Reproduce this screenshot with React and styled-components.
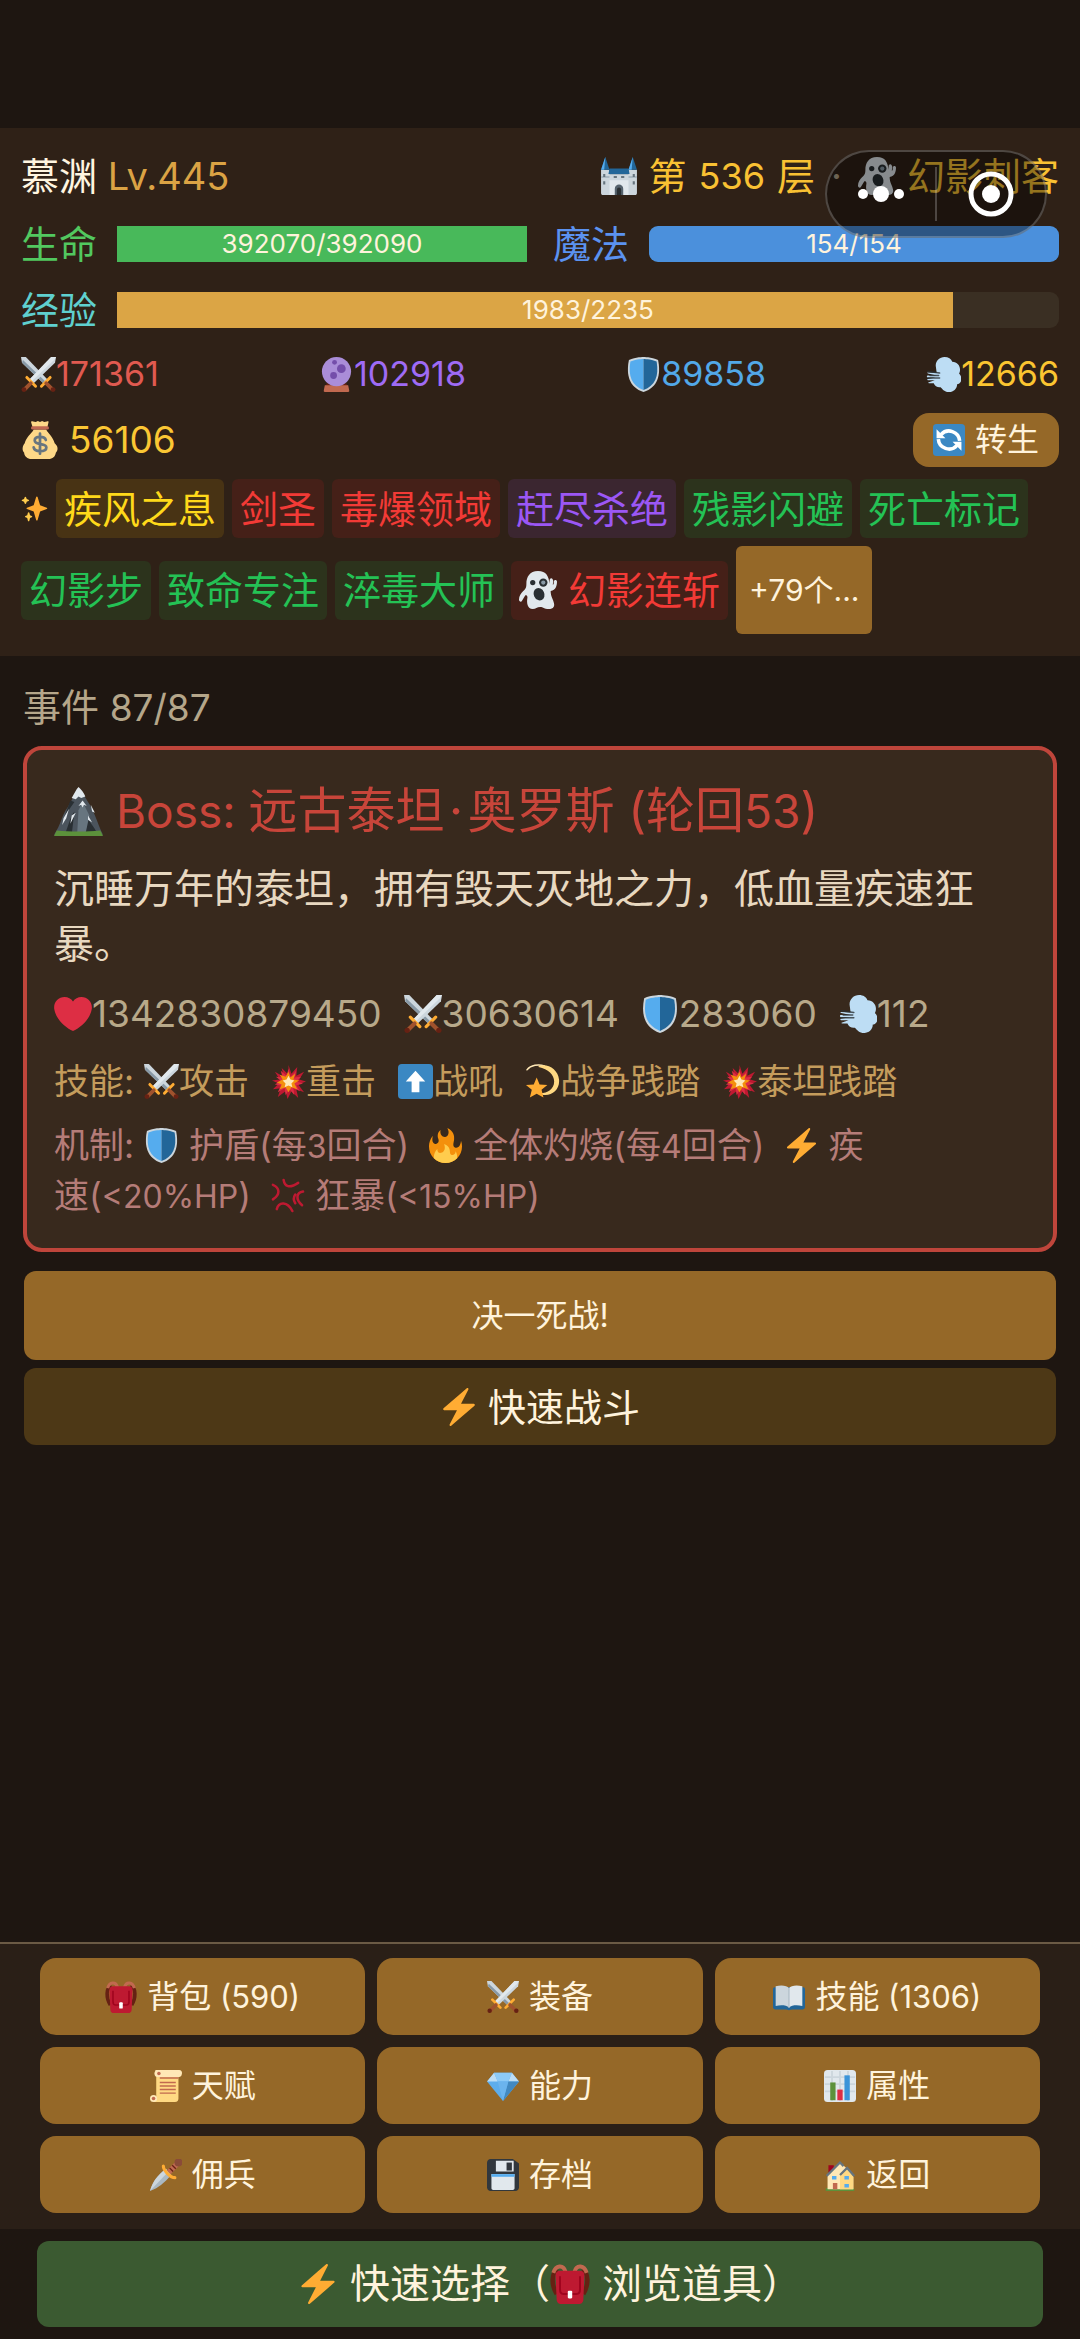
import { styled, createGlobalStyle } from "styled-components";

const GlobalStyle = createGlobalStyle`
    * {
        box-sizing: border-box;
    }
    body {
        margin: 0;
        background: #1e1611;
        color: #fff3dc;
        font-family: "Inter", "Noto Sans CJK SC", sans-serif;
    }
    button {
        font-family: inherit;
        color: inherit;
        line-height: 44px;
        border: none;
        margin: 0;
        cursor: pointer;
    }
`;

// emoji artwork, every drawing on a 36 x 36 grid
const art = {
    castle: (
        <>
            <path fill="#CCD6DD" d="M1 12h8v3h18v-3h8v22c0 1-.5 2-2 2H3c-1.500 0-2-1-2-2z" />
            <path fill="#AAB8C2" d="M1 18h8v2H1zM27 18h8v2h-8zM9 15h18v2H9z" />
            <path fill="#E1E8ED" d="M9 22h18v14H9z" />
            <path fill="#226699" d="M5 0 1 12h8zM31 0l-4 12h8zM9 11h18l1 5H8z" />
            <path fill="#55ACEE" d="M5 0 1 12h3zM31 0l-4 12h3z" />
            <path fill="#66757F" d="M3 16h2v3H3zM31 16h2v3h-2zM3 23h2v3H3zM31 23h2v3h-2zM13 18h3v2h-3zM20 18h3v2h-3z" />
            <path fill="#55626D" d="M14 36v-6a4 4 0 0 1 8 0v6z" />
            <path fill="#292F33" d="M16 36v-5a2 2 0 0 1 4 0v5z" />
        </>
    ),
    ghost: (
        <>
            <path fill="#E1E8ED" d="M18 0C10 0 7 6 7 12c0 4-1 5-3 7-2 2-4 5-4 8 0 2 2 3 3 1l3-5c1 0 2 0 2 2-1 5 0 11 5 11 3 0 4-2 7-2 3 0 4 2 8 2 5 0 6-3 5-6-1-4-3-6-3-11 5-1 6-5 6-9 0-2-3-2-3 0 0 2 0 3-1 3 0-1 1-4 0-5-1-2-3-1-3 1v3c-1-7-3-12-11-12z" />
            <circle cx="13" cy="11" r="2.500" fill="#292F33" />
            <circle cx="23" cy="11" r="4" fill="#292F33" />
            <circle cx="23" cy="11" r="2" fill="#8899A6" />
            <ellipse cx="19" cy="22" rx="5" ry="6" fill="#292F33" transform="rotate(-25 19 22)" />
        </>
    ),
    swords: (
        <>
            <path fill="#CCD6DD" d="M0 0h5l23 24-4 4L1 6z" />
            <path fill="#8899A6" d="m2 3 24 23-2 2L1 6z" />
            <path fill="#CCD6DD" d="M36 0h-5L8 24l4 4L35 6z" />
            <path fill="#E1E8ED" d="M36 0h-5L8 24l2 2L34 3z" />
            <path stroke="#FFAC33" strokeWidth="3" strokeLinecap="round" d="m6 21 9 9M30 21l-9 9" />
            <path stroke="#A0522D" strokeWidth="4" strokeLinecap="round" d="m10 27-6 6M26 27l6 6" />
            <circle cx="3" cy="33.500" r="2.500" fill="#662113" />
            <circle cx="33" cy="33.500" r="2.500" fill="#662113" />
        </>
    ),
    orb: (
        <>
            <path fill="#662113" d="M8 27h20l2 4H6z" />
            <path fill="#C1694F" d="M6 29h24l1 5c.300 1.500 0 2-1 2H6c-1 0-1.300-.500-1-2z" />
            <circle cx="18" cy="15" r="15" fill="#AA8DD8" />
            <circle cx="23" cy="12" r="4.500" fill="#744EAA" />
            <circle cx="15" cy="19" r="3.500" fill="#744EAA" />
            <circle cx="16" cy="5.500" r="2.500" fill="#744EAA" />
        </>
    ),
    shield: (
        <>
            <path fill="#CCD6DD" d="M33 3c-7-3-15-3-15-3S10 0 3 3C0 18 3 31 18 36 33 31 36 18 33 3z" />
            <path fill="#55ACEE" d="M18 34C6 29 2 20 4.500 4.500 11 2 18 2 18 2z" />
            <path fill="#226699" d="M18 34c12-5 16-14 13.500-29.500C25 2 18 2 18 2z" />
        </>
    ),
    wind: (
        <>
            <path fill="#BDDDF4" d="M10 9c0-5 4-9 9-9 4 0 7 2 8 5 5 0 8 4 8 8 0 2-.500 3-1 4 2 2 2.500 4 2.500 5.500C36.500 26 34 28 32 28c0 5-4 8-8 8-5 0-7-3-9-5-3 .500-6-1-7-4H3c-1 0-1-1 0-1l6-2H2c-1 0-1-1.500 0-1.500L10 21H2c-1.500 0-1.500-2 0-2h9l-9-2c-1-.500-1-1 0-1l9 .500z" />
            <path stroke="#292F33" strokeWidth="1.500" strokeLinecap="round" d="M2 15l12 1.500M2 21.500h12M4 19h9" opacity=".8" />
        </>
    ),
    money: (
        <>
            <path fill="#FDD888" d="M31.900 21c-1.500-6-6.500-9.500-8-13H12c-1.500 3.500-7 7-8.500 13C1 24 1 28 3 30c0 3 3 6 7 6h16c4 0 6.500-2.500 7-6 3-3 1.500-7-1.100-9z" />
            <path fill="#FDD888" d="M11 6 9.500 1c0-1 1-1 2-.500L14 1l2-1 2 1 2-1 2 1 2.500-.500c1-.500 2 0 1.500 1L25 6z" />
            <path fill="#BF6952" d="M10.500 5h15c1 0 1.500 3 0 3h-15c-1.500 0-1-3 0-3z" />
            <path fill="none" stroke="#67757F" strokeWidth="2.600" strokeLinecap="round" d="M18 12v19M23.500 18c-.500-2-2.500-3-5.500-3s-5 1.300-5 3.500c0 5 11 2 11 6.500 0 2.200-2.500 3.500-6 3.500-3.300 0-5.500-1-6-3.500" />
        </>
    ),
    refresh: (
        <>
            <rect width="36" height="36" rx="4" fill="#3B88C3" />
            <path fill="none" stroke="#fff" strokeWidth="4" d="M9 12a12 12 0 0 1 21 7M27 24A12 12 0 0 1 6 17" />
            <path fill="#fff" d="M4 6v10h10zM32 30V20H22z" />
        </>
    ),
    sparkles: (
        <>
            <path fill="#FFAC33" d="M34.347 16.893l-8.899-3.294-3.323-10.891c-.128-.42-.517-.708-.956-.708-.439 0-.828.288-.956.708l-3.322 10.891-8.9 3.294c-.393.146-.653.519-.653.938 0 .418.26.793.653.938l8.895 3.293 3.324 11.223c.126.424.516.715.959.715.442 0 .833-.291.959-.716l3.324-11.223 8.896-3.293c.391-.144.652-.518.652-.937 0-.418-.261-.792-.653-.938z" />
            <path fill="#FFCC4D" d="M14.347 27.894l-2.314-.856-.9-3.3c-.118-.436-.513-.738-.964-.738-.451 0-.846.302-.965.737l-.9 3.3-2.313.856c-.393.146-.653.52-.653.938 0 .418.26.792.653.938l2.301.853.907 3.622c.112.444.511.756.97.756.459 0 .858-.312.97-.757l.907-3.622 2.301-.853c.393-.144.653-.519.653-.937 0-.418-.26-.793-.653-.937zM10.009 6.231l-2.364-.875-.876-2.365c-.145-.393-.519-.653-.938-.653-.418 0-.792.26-.938.653l-.875 2.365-2.365.875c-.393.146-.653.52-.653.938 0 .418.26.793.653.938l2.365.875.875 2.365c.146.393.52.653.938.653.418 0 .792-.26.938-.653l.875-2.365 2.365-.875c.393-.146.653-.52.653-.938 0-.418-.26-.792-.653-.938z" />
        </>
    ),
    mountain: (
        <>
            <path fill="#4B545D" d="M0 35C5 28 6 20 10 15c3-5 6-11 8-14 3 3 5 7 7 10 4 5 7 16 11 24z" />
            <path fill="#292F33" d="M8 35c3-8 4-13 7-17l-2 17zM20 35c0-6 2-10 3-15 2 5 7 9 9 15zM12 10l3 1-7 10z" />
            <path fill="#67757F" d="m18 17 3-6 5 10-3 14h-6z" />
            <path fill="#E1E8ED" d="M18 0c2 2 4 4 5 7l-3 1-2-1-2 2-3-1c2-3 3-6 5-8zM21 10l3 4-2-1-1 2-1-2-2 1zM7 23l4-7-2 7-3 5zM27 13l3 6-2-1zM16 19l-4 8 1-6zM25 21l3 5-3-2z" />
            <path fill="#5C913B" d="M0 36l2-4c10 1 22 1 32 0l2 4z" />
        </>
    ),
    heart: (
        <path fill="#DD2E44" d="M35.885 11.833c0-5.45-4.418-9.868-9.867-9.868-3.308 0-6.227 1.633-8.018 4.129-1.791-2.496-4.71-4.129-8.017-4.129-5.45 0-9.868 4.417-9.868 9.868 0 .772.098 1.52.266 2.241C1.751 22.587 11.216 31.568 18 34.034c6.783-2.466 16.249-11.447 17.617-19.959.17-.721.268-1.469.268-2.242z" />
    ),
    boom: (
        <>
            <path fill="#BE1931" d="m18 1 3 9 6-7-1 9 8-4-5 8 7 2-8 3 6 8-8-3 2 9-7-7-4 8-2-8-8 6 3-9-8 1 6-6-7-3 8-1-5-8 9 5-2-9 7 7z" />
            <path fill="#DD2E44" d="m18 5 2 8 6-6-2 7 7-1-5 5 7 2-7 2 4 6-7-3 1 7-5-6-4 6-1-7-7 4 3-7-6-1 6-4-5-4 7 1-2-7 6 5z" />
            <path fill="#F4900C" d="m18 8 2 6 5-4-2 6 6 1-5 3 3 6-6-2-3 5-3-5-6 2 2-5-5-2 6-3-3-5 6 2z" />
            <path fill="#FFE8B6" d="m18 12 2 4 4 1-3 3 1 4-4-2-4 2 1-4-3-3 4-1z" />
        </>
    ),
    up: (
        <>
            <rect width="36" height="36" rx="4" fill="#3B88C3" />
            <path fill="#fff" d="m18 7 10 11h-6v11h-8V18H8z" />
        </>
    ),
    dizzy: (
        <>
            <path fill="none" stroke="#FFE8B6" strokeWidth="1.500" strokeLinecap="round" d="M2 6C6 1 14 0 20 2" />
            <path fill="#FFD983" d="M14 2c10-3 20 4 21 14 1 9-6 16-14 16-3 0-5-1-5-2 7 0 14-4 14-12C30 11 24 5 14 3z" />
            <path fill="#FFAC33" d="m12 14 3 7 8 .500-6 5 2 8-7-4-7 4 2-8-6-5 8-.500z" />
        </>
    ),
    fire: (
        <>
            <path fill="#F4900C" d="M35 19c0-2.062-.367-4.039-1.04-5.868-.46 5.389-3.333 8.157-6.335 6.868-2.812-1.208-.917-5.917-.777-8.164.236-3.809-.012-8.169-6.931-11.794 2.875 5.5.333 8.917-2.333 9.125-2.958.231-5.667-2.542-4.667-7.042-3.238 2.386-3.332 6.402-2.333 9 1.042 2.708-.042 4.958-2.583 5.208-2.84.28-4.418-3.041-2.963-8.333C2.52 10.965 1 14.805 1 19c0 9.389 7.611 17 17 17s17-7.611 17-17z" />
            <path fill="#FFCC4D" d="M28.394 23.999c.148 3.084-2.561 4.293-4.019 3.709-2.106-.843-1.541-2.291-2.083-5.291s-2.625-5.083-5.708-6c2.25 6.333-1.247 8.667-3.08 9.084-1.872.426-3.753-.001-3.968-4.007C7.352 23.668 6 26.676 6 30c0 .368.023.73.055 1.09C9.125 34.124 13.342 36 18 36s8.875-1.876 11.945-4.91c.032-.36.055-.722.055-1.09 0-2.187-.584-4.236-1.606-6.001z" />
        </>
    ),
    bolt: (
        <path fill="#FFAC33" d="M32.938 15.651C32.792 15.26 32.418 15 32 15H19.925L26.89 1.458c.219-.426.106-.947-.271-1.243C26.437.071 26.218 0 26 0c-.233 0-.466.082-.653.243L18 6.588 3.347 19.243c-.316.273-.43.714-.284 1.105S3.582 21 4 21h12.075L9.11 34.542c-.219.426-.106.947.271 1.243.182.144.401.215.619.215.233 0 .466-.082.653-.243L18 29.412l14.653-12.655c.317-.273.43-.714.285-1.106z" />
    ),
    anger: (
        <path fill="none" stroke="#BE1931" strokeWidth="2.600" strokeLinecap="round" d="M14 2c1 7 6 9 15 3M34 14c-7 1-8 8-1 14M3 7c7 3 8 10 0 15M7 32c2-8 11-8 16 2M26 17c-2 3-2 6 0 9" />
    ),
    backpack: (
        <>
            <path fill="none" stroke="#662113" strokeWidth="4" d="M7 5C1 8 1 19 6 27M29 5c6 3 6 14 1 22" />
            <path fill="none" stroke="#C1694F" strokeWidth="3.500" d="M3 8c2-7 9-8 11-1M33 8c-2-7-9-8-11-1" />
            <path fill="#BE1931" d="M9 6h18c3 0 4 2 4 5l-1 21c0 3-2 4-4 4H10c-2 0-4-1-4-4L5 11c0-3 1-5 4-5z" />
            <path fill="none" stroke="#A0041E" strokeWidth="1.800" d="M9 11v12c0 3 1 4 3 4h12c2 0 3-1 3-4V11" />
            <rect x="16" y="24" width="4" height="7" rx="1" fill="#fff" />
        </>
    ),
    scroll: (
        <>
            <path fill="#FFD983" d="M7 4h25v28c0 2-1 4-4 4H4V31h3z" />
            <path fill="#FFE8B6" d="M6 0h27c2 0 3 1.500 3 3.500S35 8 33 8H8z" />
            <circle cx="9" cy="4" r="4" fill="#FFE8B6" />
            <circle cx="10" cy="4" r="2" fill="#C1694F" />
            <circle cx="4" cy="32" r="4" fill="#FFE8B6" />
            <circle cx="4" cy="32" r="2" fill="#C1694F" />
            <path stroke="#C1694F" strokeWidth="1.600" d="M11 14h18M11 18h18M11 22h18M11 26h18M11 9h21" />
        </>
    ),
    gem: (
        <>
            <path fill="#5DADEC" d="M8 3h20l8 10-18 22L0 13z" />
            <path fill="#BDDDF4" d="m8 3 4 10H0zM28 3l-4 10h12z" />
            <path fill="#8CCAF7" d="M8 3h20l-4 10H12z" />
            <path fill="#4289C1" d="M24 13h12L18 35z" />
            <path fill="#6BB4EE" d="M12 13h12l-6 22z" />
        </>
    ),
    chart: (
        <>
            <rect width="36" height="36" rx="4" fill="#E1E8ED" />
            <path stroke="#CCD6DD" strokeWidth="2" d="M1 8h34M1 16h34M1 24h34M9 1v34M18 1v34M27 1v34" />
            <path fill="#5C913B" d="M7 14h6v20H7z" />
            <path fill="#DD2E44" d="M15 22h6v12h-6z" />
            <path fill="#3B94D9" d="M23 6h6v28h-6z" />
        </>
    ),
    dagger: (
        <>
            <path fill="#AAB8C2" d="M18 11c-9 7-15 14-18 25 9-3 16-9 24-18z" />
            <path fill="#CCD6DD" d="M18 11C9 18 3 25 0 36l20-21z" />
            <path stroke="#BF6952" strokeWidth="6" d="m21 15 9-9" />
            <path stroke="#662113" strokeWidth="1.500" d="m22 10 4 4M25 7l4 4" />
            <path stroke="#FFAC33" strokeWidth="3.500" strokeLinecap="round" d="M15 8c0 5 8 13 13 13" />
            <circle cx="32" cy="4" r="4.500" fill="#8A4B38" />
        </>
    ),
    floppy: (
        <>
            <path fill="#31373D" d="M4 0h25l7 5v27c0 2-2 4-4 4H4c-2 0-4-2-4-4V4c0-2 2-4 4-4z" />
            <path fill="#E1E8ED" d="M10 2h20v12H10zM5 17h26v16c0 1-1 2-2 2H7c-1 0-2-1-2-2z" />
            <path fill="#31373D" d="M22 4h6v9h-6z" />
            <path fill="#55ACEE" d="M5 17h26v3H5z" />
        </>
    ),
    book: (
        <>
            <path fill="#226699" d="M2 7h32c1 0 2 1 2 2v20c0 2-1 3-3 3H21l-3 1-3-1H3c-2 0-3-1-3-3V9c0-1 1-2 2-2z" />
            <path fill="#CCD6DD" d="M18 8c-2-3-9-4-15-2v22c6-1 12-1 15 2z" />
            <path fill="#E1E8ED" d="M18 8c2-3 9-4 15-2v22c-6-1-12-1-15 2z" />
            <path stroke="#AAB8C2" strokeWidth="1.200" d="M18 8v22" />
        </>
    ),
    house: (
        <>
            <path fill="#A0041E" d="M5 7h6v9H5z" />
            <path fill="#5C913B" d="M2 33c8-2 24-2 32 0v3H2z" />
            <path fill="#FFE8B6" d="M4 34V18L18 4l8 7 7 9v14z" />
            <path fill="#FFD983" d="m18 18 8-7 7 9v14H18z" />
            <path fill="none" stroke="#66757F" strokeWidth="2.500" d="M3 19 18 4l4 4M18 18l8-8 8 9" />
            <path fill="#55ACEE" d="M9 19h5v4H9zM23 19h5v4h-5zM23 28h5v4h-5z" />
            <path fill="#C1694F" d="M10 27h5v7h-5z" />
        </>
    ),
};

function Emoji({ name, size = 38, after = 0, before = 0 }) {
    return (
        <EmojiSvg viewBox="0 0 36 36" fill="none" aria-hidden="true" $size={size} $after={after} $before={before}>
            {art[name]}
        </EmojiSvg>
    );
}

const heroStats = [
    { icon: "swords", value: "171361", color: "#e05a50" },
    { icon: "orb", value: "102918", color: "#9f6bf5" },
    { icon: "shield", value: "89858", color: "#52a8e8" },
    { icon: "wind", value: "12666", color: "#fbc531" },
];

const traits = [
    { name: "疾风之息", tone: "gold" },
    { name: "剑圣", tone: "red" },
    { name: "毒爆领域", tone: "red" },
    { name: "赶尽杀绝", tone: "purple" },
    { name: "残影闪避", tone: "green" },
    { name: "死亡标记", tone: "green" },
    { name: "幻影步", tone: "green" },
    { name: "致命专注", tone: "green" },
    { name: "淬毒大师", tone: "green" },
    { name: "幻影连斩", tone: "red", icon: "ghost" },
];

const tones = {
    gold: { color: "#ffd91a", background: "#483314" },
    red: { color: "#f23a36", background: "#452018" },
    purple: { color: "#9b57f5", background: "#3b2630" },
    green: { color: "#24c255", background: "#2c331c" },
};

const bossStats = [
    { icon: "heart", value: "1342830879450" },
    { icon: "swords", value: "30630614" },
    { icon: "shield", value: "283060" },
    { icon: "wind", value: "112" },
];

const bossSkills = [
    { icon: "swords", name: "攻击" },
    { icon: "boom", name: "重击" },
    { icon: "up", name: "战吼" },
    { icon: "dizzy", name: "战争践踏" },
    { icon: "boom", name: "泰坦践踏" },
];

const menu = [
    { icon: "backpack", label: "背包", count: 590 },
    { icon: "swords", label: "装备" },
    { icon: "book", label: "技能", count: 1306 },
    { icon: "scroll", label: "天赋" },
    { icon: "gem", label: "能力" },
    { icon: "chart", label: "属性" },
    { icon: "dagger", label: "佣兵" },
    { icon: "floppy", label: "存档" },
    { icon: "house", label: "返回" },
];

function Meter({ label, color, fill, value, max }) {
    return (
        <MeterGroup>
            <MeterLabel $color={color}>{label}</MeterLabel>
            <MeterTrack>
                <MeterFill $fill={fill} $full={value === max} style={{ width: `${(value / max) * 100}%` }} />
                <MeterText>{value}/{max}</MeterText>
            </MeterTrack>
        </MeterGroup>
    );
}

function App() {
    return (
        <Page>
            <GlobalStyle />
            <Header>
                <TitleRow>
                    <HeroName>
                        慕渊 <Level>Lv.445</Level>
                    </HeroName>
                    <Floor>
                        <Emoji name="castle" after={11} />
                        第<FloorNumber>536</FloorNumber>层
                        <Dot>·</Dot>
                        <Emoji name="ghost" after={11} />
                        幻影刺客
                    </Floor>
                </TitleRow>
                <MeterRow>
                    <Meter label="生命" color="#52c85f" fill="#48b95a" value={392070} max={392090} />
                    <Meter label="魔法" color="#5b92f0" fill="#4b90dc" value={154} max={154} />
                </MeterRow>
                <Meter label="经验" color="#5fd0cf" fill="#dba545" value={1983} max={2235} />
                <StatRow>
                    {heroStats.map((stat) => (
                        <Stat key={stat.icon} $color={stat.color}>
                            <Emoji name={stat.icon} size={35} />
                            {stat.value}
                        </Stat>
                    ))}
                </StatRow>
                <GoldRow>
                    <Gold>
                        <Emoji name="money" after={10} />
                        56106
                    </Gold>
                    <RebirthButton type="button">
                        <Emoji name="refresh" size={32} />
                        转生
                    </RebirthButton>
                </GoldRow>
                <TraitList>
                    <Emoji name="sparkles" size={27} />
                    {traits.map((trait) => (
                        <Trait key={trait.name} $tone={tones[trait.tone]}>
                            {trait.icon && <Emoji name={trait.icon} after={11} />}
                            {trait.name}
                        </Trait>
                    ))}
                    <MoreButton type="button">+79个...</MoreButton>
                </TraitList>
                <Capsule>
                    <CapsuleButton type="button" aria-label="更多">
                        <svg width="50" height="50" viewBox="0 0 50 50" fill="#fff">
                            <circle cx="7" cy="25" r="5" />
                            <circle cx="25" cy="25" r="8" />
                            <circle cx="43" cy="25" r="5" />
                        </svg>
                    </CapsuleButton>
                    <CapsuleDivider />
                    <CapsuleButton type="button" aria-label="关闭">
                        <svg width="50" height="50" viewBox="0 0 50 50">
                            <circle cx="25" cy="25" r="20" fill="none" stroke="#fff" strokeWidth="5" />
                            <circle cx="25" cy="25" r="9" fill="#fff" />
                        </svg>
                    </CapsuleButton>
                </Capsule>
            </Header>

            <Main>
                <EventCount>
                    事件 <Latin $size={37}>87/87</Latin>
                </EventCount>
                <BossCard>
                    <BossTitle>
                        <Emoji name="mountain" size={49} after={13} />
                        <span>
                            <Latin $size={46}>Boss: </Latin>
                            远古泰坦<TitleDot>·</TitleDot>奥罗斯 (轮回<Latin $size={46}>53</Latin>)
                        </span>
                    </BossTitle>
                    <BossStory>沉睡万年的泰坦，拥有毁天灭地之力，低血量疾速狂暴。</BossStory>
                    <BossStats>
                        {bossStats.map((stat) => (
                            <BossStat key={stat.icon}>
                                <Emoji name={stat.icon} />
                                {stat.value}
                            </BossStat>
                        ))}
                    </BossStats>
                    <BossSkills>
                        <SkillLabel>技能:</SkillLabel>
                        {bossSkills.map((skill) => (
                            <Skill key={skill.name}>
                                <Emoji name={skill.icon} size={35} />
                                {skill.name}
                            </Skill>
                        ))}
                    </BossSkills>
                    <BossRules>
                        机制: <InlineEmoji><Emoji name="shield" size={35} after={10} /></InlineEmoji>
                        护盾(每<Latin $size={32}>3</Latin>回合)
                        <InlineEmoji><Emoji name="fire" size={35} before={19} after={10} /></InlineEmoji>
                        全体灼烧(每<Latin $size={32}>4</Latin>回合)
                        <InlineEmoji><Emoji name="bolt" size={35} before={19} after={10} /></InlineEmoji>
                        疾<Unbroken>速(<Latin $size={32}>&lt;20%HP</Latin>)</Unbroken>
                        <InlineEmoji><Emoji name="anger" size={35} before={19} after={10} /></InlineEmoji>
                        狂暴(<Latin $size={32}>&lt;15%HP</Latin>)
                    </BossRules>
                </BossCard>
                <Actions>
                    <FightButton type="button">决一死战!</FightButton>
                    <QuickFightButton type="button">
                        <Emoji name="bolt" />
                        快速战斗
                    </QuickFightButton>
                </Actions>
            </Main>

            <Menu>
                {menu.map((item) => (
                    <MenuButton type="button" key={item.label}>
                        <Emoji name={item.icon} size={32} />
                        <span>
                            {item.label}
                            {item.count && <Latin $size={31}> ({item.count})</Latin>}
                        </span>
                    </MenuButton>
                ))}
            </Menu>
            <Footer>
                <QuickPickButton type="button">
                    <Emoji name="bolt" size={40} after={12} />
                    快速选择（
                    <Emoji name="backpack" size={40} after={12} />
                    浏览道具<HalfWidth>）</HalfWidth>
                </QuickPickButton>
            </Footer>
        </Page>
    );
}

const EmojiSvg = styled.svg`
    flex: none;
    width: ${(p) => p.$size}px;
    height: ${(p) => p.$size}px;
    margin-left: ${(p) => p.$before}px;
    margin-right: ${(p) => p.$after}px;
`;

const Latin = styled.span`
    font-size: ${(p) => p.$size}px;
    white-space: pre;
`;

/* closing bracket without the blank half of its square */
const HalfWidth = styled.span`
    font-feature-settings: "halt";
`;

const Page = styled.div`
    min-height: 100vh;
    padding-top: 128px;
    display: flex;
    flex-direction: column;
`;

const Header = styled.header`
    position: relative;
    background: #2f2117;
    padding: 21px 21px 22px;
    display: flex;
    flex-direction: column;
    gap: 12px;
    font-size: 38px;
    line-height: 54px;
`;

const TitleRow = styled.div`
    display: flex;
    justify-content: space-between;
    align-items: center;
    white-space: nowrap;
`;

const HeroName = styled.div`
    color: #fff5e0;
`;

const Level = styled.span`
    color: #dba344;
`;

const Floor = styled.div`
    display: flex;
    align-items: center;
    color: #f9c133;
`;

const FloorNumber = styled.span`
    margin: 0 12px;
    font-size: 36px;
`;

const Dot = styled.span`
    width: 43px;
    text-align: center;
    color: #b5a68a;
`;

const MeterRow = styled.div`
    display: flex;
    gap: 26px;
    margin-top: 2px;
`;

const MeterGroup = styled.div`
    flex: 1;
    display: flex;
    align-items: center;
    gap: 20px;
`;

const MeterLabel = styled.span`
    color: ${(p) => p.$color};
`;

const MeterTrack = styled.div`
    flex: 1;
    display: grid;
    height: 36px;
    background: #3a2f23;
    border-radius: 9px;
`;

const MeterFill = styled.div`
    grid-area: 1 / 1;
    background: ${(p) => p.$fill};
    border-radius: ${(p) => (p.$full ? "9px" : "0")};
`;

const MeterText = styled.span`
    grid-area: 1 / 1;
    text-align: center;
    font-size: 26px;
    line-height: 36px;
`;

const StatRow = styled.div`
    display: flex;
    justify-content: space-between;
    line-height: 50px;
`;

const Stat = styled.div`
    display: flex;
    align-items: center;
    color: ${(p) => p.$color};
    font-size: 34px;
`;

const GoldRow = styled.div`
    display: flex;
    justify-content: space-between;
    align-items: center;
    margin-top: 2px;
`;

const Gold = styled.div`
    display: flex;
    align-items: center;
    color: #fbc734;
    font-size: 37px;
`;

const RebirthButton = styled.button`
    display: flex;
    align-items: center;
    gap: 10px;
    height: 54px;
    padding: 0 20px;
    border-radius: 16px;
    background: #956828;
    font-size: 32px;
`;

const TraitList = styled.div`
    display: flex;
    flex-wrap: wrap;
    align-items: center;
    gap: 8px;
`;

const Trait = styled.span`
    display: flex;
    align-items: center;
    height: 59px;
    padding: 0 8px;
    border-radius: 6px;
    color: ${(p) => p.$tone.color};
    background: ${(p) => p.$tone.background};
`;

const MoreButton = styled.button`
    height: 88px;
    padding: 0 13px;
    border-radius: 6px;
    background: #956828;
    font-size: 30px;
`;

/* floats over the header, like the host app's own controls */
const Capsule = styled.div`
    position: absolute;
    top: 22px;
    right: 33px;
    width: 222px;
    height: 88px;
    display: flex;
    align-items: center;
    border: 2px solid rgba(255, 255, 255, 0.22);
    border-radius: 44px;
    background: rgba(0, 0, 0, 0.4);
`;

const CapsuleButton = styled.button`
    flex: 1;
    display: flex;
    justify-content: center;
    padding: 0;
    background: none;
`;

const CapsuleDivider = styled.span`
    width: 2px;
    height: 54px;
    background: rgba(255, 255, 255, 0.22);
`;

const Main = styled.main`
    flex: 1;
    padding: 24px 23px;
`;

const EventCount = styled.div`
    margin-bottom: 11px;
    color: #b5a68a;
    font-size: 38px;
    line-height: 54px;
`;

const BossCard = styled.section`
    display: flex;
    flex-direction: column;
    gap: 16px;
    padding: 27px;
    border: 4px solid #bf453b;
    border-radius: 19px;
    background: #38291d;
`;

const BossTitle = styled.h2`
    display: flex;
    align-items: center;
    margin: 0;
    color: #c8453a;
    font-size: 49px;
    font-weight: 400;
    line-height: 68px;
`;

const TitleDot = styled.span`
    display: inline-block;
    width: 23px;
    text-align: center;
`;

const BossStory = styled.p`
    margin: 0;
    color: #e8d8c0;
    font-size: 40px;
    line-height: 55px;
`;

const BossStats = styled.div`
    display: flex;
    flex-wrap: wrap;
    gap: 22px;
    color: #b8a98a;
    font-size: 37px;
    line-height: 54px;
`;

const BossStat = styled.span`
    display: flex;
    align-items: center;
`;

const BossSkills = styled.div`
    display: flex;
    flex-wrap: wrap;
    column-gap: 22px;
    color: #c49c5c;
    font-size: 35px;
    line-height: 48px;
`;

const SkillLabel = styled.span`
    margin-right: -12px;
`;

const Skill = styled.span`
    display: flex;
    align-items: center;
`;

const BossRules = styled.p`
    margin: 0;
    color: #b57c78;
    font-size: 35px;
    line-height: 48px;
`;

const InlineEmoji = styled.span`
    svg {
        vertical-align: -5px;
    }
`;

const Unbroken = styled.span`
    white-space: nowrap;
`;

const Actions = styled.div`
    display: flex;
    flex-direction: column;
    gap: 8px;
    margin-top: 19px;
    padding: 0 1px;
`;

const FightButton = styled.button`
    height: 89px;
    border-radius: 12px;
    background: #956828;
    font-size: 32px;
`;

const QuickFightButton = styled.button`
    display: flex;
    align-items: center;
    justify-content: center;
    gap: 10px;
    height: 77px;
    border-radius: 12px;
    background: #4d3816;
    font-size: 38px;
`;

const Menu = styled.nav`
    display: grid;
    grid-template-columns: repeat(3, 1fr);
    gap: 12px;
    padding: 14px 40px 16px;
    border-top: 2px solid #6b5a45;
    background: #2a1f17;
`;

const MenuButton = styled.button`
    display: flex;
    align-items: center;
    justify-content: center;
    gap: 10px;
    height: 77px;
    border-radius: 16px;
    background: #956828;
    font-size: 32px;
`;

const Footer = styled.footer`
    padding: 12px 37px;
`;

const QuickPickButton = styled.button`
    display: flex;
    align-items: center;
    justify-content: center;
    width: 100%;
    height: 86px;
    border-radius: 12px;
    background: #3b5a31;
    font-size: 40px;
`;

export default App;
